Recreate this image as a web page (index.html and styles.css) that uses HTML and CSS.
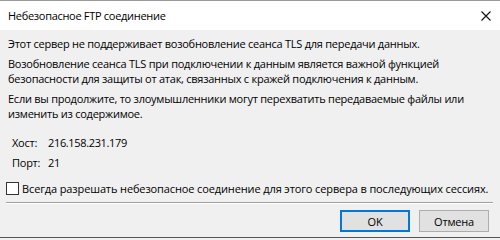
FILE: index.html
```html
<!DOCTYPE html>
<html lang="ru">
<head>
<meta charset="utf-8">
<link rel="stylesheet" href="styles.css">
</head>
<body>
<div class="window">
  <div class="titlebar">
    <span class="title">Небезопасное FTP соединение</span>
    <svg class="close" width="10" height="10" viewBox="0 0 10 10"><path d="M0.5 0.5L9.5 9.5M9.5 0.5L0.5 9.5" stroke="#111" stroke-width="1.1" fill="none"/></svg>
  </div>
  <div class="content">
    <p class="para">Этот сервер не поддерживает возобновление сеанса TLS для передачи данных.</p>
    <p class="para">Возобновление сеанса TLS при подключении к данным является важной функцией<br>безопасности для защиты от атак, связанных с кражей подключения к данным.</p>
    <p class="para">Если вы продолжите, то злоумышленники могут перехватить передаваемые файлы или<br>изменить из содержимое.</p>
    <div class="details">
      <span class="label">Хост:</span><span class="value">216.158.231.179</span>
      <span class="label">Порт:</span><span class="value">21</span>
    </div>
    <label class="check"><span class="box"></span><span class="check-text">Всегда разрешать небезопасное соединение для этого сервера в последующих сессиях.</span></label>
    <div class="sep"></div>
    <div class="buttons">
      <button class="btn btn-default">OK</button>
      <button class="btn">Отмена</button>
    </div>
  </div>
</div>
</body>
</html>
```
FILE: styles.css
```css
* { box-sizing: border-box; }
html, body { margin: 0; padding: 0; }
body {
  width: 500px;
  height: 240px;
  overflow: hidden;
  background: #f0f0f0;
  font-family: "Open Sans", "Noto Sans", sans-serif;
  font-size: 11px;
  letter-spacing: -0.25px;
  color: #000;
}
.window {
  width: 500px;
  height: 238px;
  border-top: 1px solid #9a9a9a;
  border-bottom: 1px solid #555;
  background: #f0f0f0;
  display: flex;
  flex-direction: column;
}
.titlebar {
  height: 29px;
  background: #fff;
  display: flex;
  align-items: center;
  justify-content: space-between;
  padding: 0 9px 0 8px;
}
.title { font-size: 11px; letter-spacing: -0.3px; }
.content {
  flex: 1;
  padding: 6px 6px 0 8px;
  display: flex;
  flex-direction: column;
}
.para {
  margin: 0 0 5px 0;
  line-height: 15px;
  white-space: nowrap;
}
.details {
  display: grid;
  grid-template-columns: 36px 1fr;
  row-gap: 5px;
  padding: 9px 0 0 4px;
  line-height: 15px;
}
.value { letter-spacing: -0.35px; }
.check {
  display: flex;
  align-items: center;
  gap: 3px;
  margin: 11px 0 0 -2px;
  line-height: 15px;
}
.check-text { white-space: nowrap; letter-spacing: -0.12px; }
.box {
  width: 13px;
  height: 13px;
  border: 1px solid #333;
  background: #fff;
  flex: none;
}
.sep {
  height: 2px;
  border-top: 1px solid #a0a0a0;
  border-bottom: 1px solid #fff;
  margin: 6px 1px 0 -2px;
}
.buttons {
  display: flex;
  justify-content: flex-end;
  gap: 9px;
  margin-top: 6px;
  padding-right: 5px;
}
.btn {
  width: 70px;
  height: 22px;
  background: #e1e1e1;
  border: 1px solid #adadad;
  font-family: inherit;
  font-size: 11px;
  letter-spacing: -0.2px;
  padding: 0;
  color: #000;
}
.btn-default {
  border: 1px solid #0078d7;
  box-shadow: inset 0 0 0 1px #0078d7;
}
```
